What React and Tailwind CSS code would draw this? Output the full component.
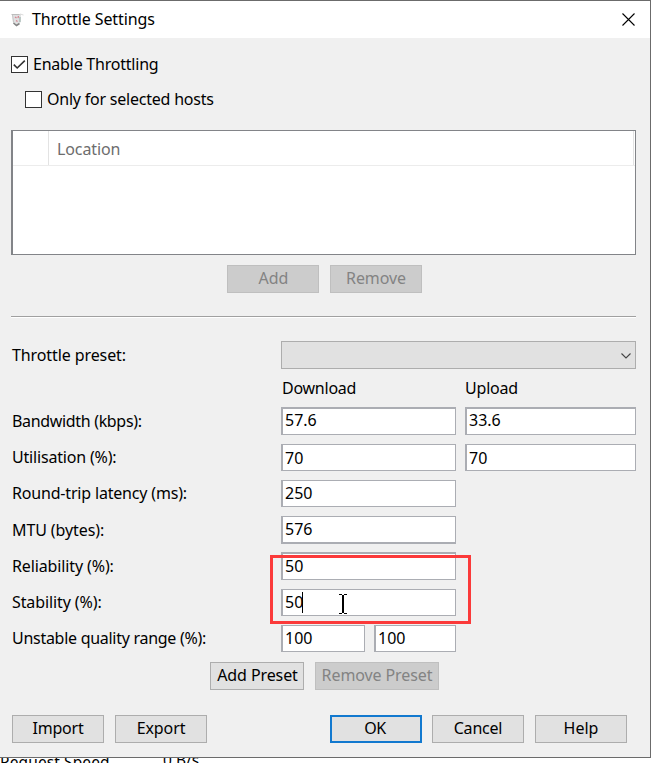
import React, { useState } from 'react';

const rows = [
    { label: 'Bandwidth (kbps):', tracking: 'tracking-[-0.33px]', gap: 'mt-0', field: 'h-[28px] border-t-2 pb-[3px]', values: ['57.6', '33.6'] },
    { label: 'Utilisation (%):', tracking: 'tracking-[-0.18px]', gap: 'mt-[9px]', field: 'h-[27px]', values: ['70', '70'] },
    { label: 'Round-trip latency (ms):', tracking: 'tracking-[-0.18px]', gap: 'mt-[9px]', field: 'h-[27px] pb-px', values: ['250'] },
    { label: 'MTU (bytes):', tracking: 'tracking-[-0.1px]', gap: 'mt-[9px]', field: 'h-[28px] border-b-2 pb-px', values: ['576'] },
    { label: 'Reliability (%):', tracking: 'tracking-[-0.12px]', gap: 'mt-[8px]', field: 'h-[28px] border-t-2 pb-[2px]', values: ['50'] },
    { label: 'Stability (%):', tracking: 'tracking-[-0.1px]', gap: 'mt-[9px]', field: 'h-[27px] pb-px', values: ['50'], caret: true },
];

const Button = ({ children, className = '', disabled, primary }) => {
    let look = 'border border-[#adadad] bg-[#e1e1e1] text-black';
    if (disabled) look = 'border border-[#bfbfbf] bg-[#cccccc] text-[#838383]';
    if (primary) look = 'border-2 border-[#1279cf] bg-[#e1e1e1] text-black';
    return (
        <button disabled={disabled} className={`flex h-[28px] shrink-0 items-center justify-center whitespace-nowrap pb-[2px] leading-none ${look} ${className}`}>
            {children}
        </button>
    );
};

const Field = ({ value, className = '', caret }) => (
    <div className={`flex shrink-0 items-center border border-l-2 border-[#abadb3] bg-white pl-[2px] leading-none ${className}`}>
        {value}
        {caret && <span className="-ml-px h-[21px] w-px bg-black" />}
    </div>
);

const Checkbox = ({ label, checked, onChange, className = '' }) => (
    <div className={`flex h-[17px] items-center leading-none ${className}`} onClick={onChange}>
        <span className="flex h-[17px] w-[17px] shrink-0 items-center justify-center border border-[#333333] bg-white">
            {checked && (
                <svg width="15" height="15" viewBox="0 0 15 15" fill="none" stroke="#333" strokeWidth="1.6">
                    <path d="M1.8 7.6 L5.2 11 L12.8 3.6" />
                </svg>
            )}
        </span>
        <span className="ml-[5px] pb-px whitespace-nowrap tracking-[-0.22px]">{label}</span>
    </div>
);

const AppIcon = () => (
    <svg width="14" height="16" viewBox="0 0 14 16" fill="none">
        <path d="M1.5 2 L10 2 L9.5 10.5 L5.5 14 L2 10.5 Z" fill="#dfe0e1" />
        <path d="M0.5 2.5 H8.5" stroke="#bdbdbd" />
        <path d="M1.5 3 L2.5 10.5" stroke="#c4c4c4" />
        <path d="M9 2 L12.5 3" stroke="#dcdcdc" />
        <path d="M2.5 11 L5.5 13.5 L8.5 11.5" stroke="#858585" strokeWidth="1.6" />
        <path d="M4 5 L5.5 6 M7.5 4 L7 6 M5 8.5 L6.5 9.5" stroke="#d5848f" strokeWidth="1.2" />
        <path d="M9 5 V10" stroke="#8fa9a4" />
    </svg>
);

export default function App() {
    const [enabled, setEnabled] = useState(true);
    const [selectedOnly, setSelectedOnly] = useState(false);

    return (
        <div className="relative h-[763px] w-[653px] overflow-hidden bg-white font-['Noto_Sans',sans-serif] text-[16px] text-black">
            <div className="flex h-[758px] w-[651px] flex-col border-t border-r border-b border-[#6b6b6b] bg-[#f0f0f0]">
                <div className="flex h-[37px] shrink-0 items-center bg-white pr-[15px] pl-[11px]">
                    <AppIcon />
                    <h1 className="ml-[7px] pb-px text-[16px] leading-none tracking-[-0.1px]">Throttle Settings</h1>
                    <svg className="ml-auto" width="13" height="13" viewBox="0 0 13 13" fill="none" stroke="#000" strokeWidth="1.1">
                        <path d="M0.5 0.5 L12.5 12.5 M12.5 0.5 L0.5 12.5" />
                    </svg>
                </div>

                <Checkbox label="Enable Throttling" checked={enabled} onChange={() => setEnabled(!enabled)} className="mt-[18px] ml-[11px]" />
                <Checkbox label="Only for selected hosts" checked={selectedOnly} onChange={() => setSelectedOnly(!selectedOnly)} className="mt-[18px] ml-[25px]" />

                <div className="mt-[22px] ml-[11px] h-[125px] w-[625px] shrink-0 border border-l-2 border-[#828488] bg-white">
                    <div className="flex h-[35px] border-b border-[#ececec] pr-px">
                        <div className="w-[36px] border-r border-[#e3e3e3]" />
                        <div className="flex flex-1 items-center border-r border-[#e3e3e3] pt-[2px] pl-[8px] leading-none tracking-[-0.1px] text-[#6d6d6d]">Location</div>
                    </div>
                </div>

                <div className="mt-[10px] ml-[227px] flex gap-[11px]">
                    <Button disabled className="w-[92px] pl-px">Add</Button>
                    <Button disabled className="w-[92px] tracking-[-0.1px]">Remove</Button>
                </div>

                <div className="mt-[23px] ml-[11px] h-[2px] w-[625px] shrink-0 border-t border-b border-t-[#a0a0a0] border-b-white" />

                <div className="mt-[23px] ml-[12px] flex h-[28px] items-center leading-none">
                    <span className="w-[269px] tracking-[-0.1px]">Throttle preset:</span>
                    <div className="flex h-[28px] w-[355px] items-center justify-end border border-[#adadad] bg-[#e1e1e1] pt-px pr-[4px]">
                        <svg width="10" height="6" viewBox="0 0 10 6" fill="none" stroke="#444" strokeWidth="1.1">
                            <path d="M0.5 0.5 L5 5 L9.5 0.5" />
                        </svg>
                    </div>
                </div>

                <div className="ml-[282px] flex h-[38px] items-center leading-none">
                    <span className="w-[183px] tracking-[-0.25px]">Download</span>
                    <span className="tracking-[-0.2px]">Upload</span>
                </div>

                {rows.map((row) => (
                    <div key={row.label} className={`ml-[12px] flex items-center leading-none ${row.gap}`}>
                        <span className={`w-[269px] pb-px ${row.tracking}`}>{row.label}</span>
                        <Field value={row.values[0]} caret={row.caret} className={`w-[175px] ${row.field}`} />
                        {row.values[1] && <Field value={row.values[1]} className={`ml-[9px] w-[171px] ${row.field}`} />}
                    </div>
                ))}
                <div className="mt-[9px] ml-[12px] flex items-center leading-none">
                    <span className="w-[269px] pb-px tracking-[-0.28px]">Unstable quality range (%):</span>
                    <Field value="100" className="h-[27px] w-[84px] pb-px" />
                    <Field value="100" className="ml-[9px] h-[27px] w-[82px] pb-px" />
                </div>

                <div className="mt-[10px] ml-[210px] flex gap-[11px]">
                    <Button className="w-[94px] pl-px tracking-[-0.1px]">Add Preset</Button>
                    <Button disabled className="w-[124px] tracking-[-0.1px]">Remove Preset</Button>
                </div>

                <div className="mt-[25px] ml-[12px] flex">
                    <Button className="w-[92px] tracking-[-0.2px]">Import</Button>
                    <Button className="ml-[11px] w-[92px] tracking-[-0.1px]">Export</Button>
                    <Button primary className="ml-[123px] w-[92px] pr-[2px] tracking-[-0.4px]">OK</Button>
                    <Button className="ml-[10px] w-[92px] tracking-[-0.2px]">Cancel</Button>
                    <Button className="ml-[11px] w-[92px]">Help</Button>
                </div>
            </div>

            {/* status text of the window behind the dialog */}
            <div className="flex h-[5px] overflow-hidden text-[15.5px] leading-none">
                <span className="-mt-[3px] w-[163px] whitespace-nowrap tracking-[0.1px]">Request Speed</span>
                <span className="-mt-[5px]">0 B/s</span>
            </div>

            <div className="absolute top-[555px] left-[270px] h-[69px] w-[201px] border-[3px] border-[#fb3a3a]" />
            <svg className="absolute top-[594px] left-[339px]" width="9" height="20" viewBox="0 0 9 20" fill="none" stroke="#000">
                <path d="M0 0.5 H3 M5 0.5 H8 M0 19.5 H3 M5 19.5 H8 M3 1.5 H5 M3 18.5 H5" />
                <path d="M4 1 V19" strokeWidth="2" />
            </svg>
        </div>
    );
}
